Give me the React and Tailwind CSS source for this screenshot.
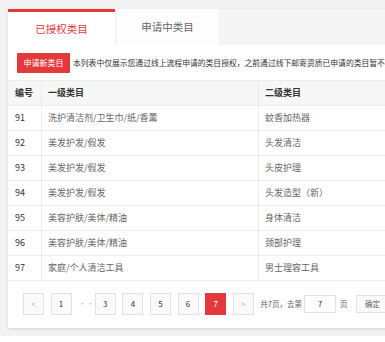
import React from "react";

const rows = [
  ["91", "洗护清洁剂/卫生巾/纸/香薰", "蚊香加热器"],
  ["92", "美发护发/假发", "头发清洁"],
  ["93", "美发护发/假发", "头皮护理"],
  ["94", "美发护发/假发", "头发造型（新）"],
  ["95", "美容护肤/美体/精油", "身体清洁"],
  ["96", "美容护肤/美体/精油", "颈部护理"],
  ["97", "家庭/个人清洁工具", "男士理容工具"],
];

function PageBtn({ children, active, muted }) {
  return (
    <div
      className={
        "w-[21px] h-[22px] flex items-center justify-center border text-[8px] " +
        (active
          ? "bg-[#e4393c] border-[#e4393c] text-white"
          : "bg-[#fafafa] border-[#e2e2e2] " + (muted ? "text-[#aaa]" : "text-[#333]"))
      }
    >
      {children}
    </div>
  );
}

export default function App() {
  return (
    <div
      className="w-[385px] h-[342px] overflow-hidden bg-[#f2f2f2] relative"
      style={{ fontFamily: '"Noto Sans CJK SC", "Noto Sans", sans-serif' }}
    >
      <div className="pl-[8px] pt-[9px]">
        <div className="w-[440px] bg-white shadow-[0_1px_3px_rgba(0,0,0,0.12)]">
          {/* tabs */}
          <div className="flex h-[36px] bg-[#f5f5f5]">
            <div className="w-[107px] bg-white border-t-[3px] border-[#e4393c] flex items-center justify-center text-[10.5px] text-[#e4393c]">
              已授权类目
            </div>
            <div className="ml-[2px] w-[101px] bg-[#fdfdfd] flex items-center justify-center text-[10.5px] text-[#666]">
              申请中类目
            </div>
          </div>
          {/* notice */}
          <div className="flex items-center pl-[9px] pt-[8px] h-[28px] whitespace-nowrap">
            <div className="w-[53px] h-[20px] bg-[#e4393c] rounded-[1px] text-white text-[8px] flex items-center justify-center">
              申请新类目
            </div>
            <div className="ml-[3px] text-[7.8px] text-[#333]">
              本列表中仅展示您通过线上流程申请的类目授权，之前通过线下邮寄资质已申请的类目暂不在此展示
            </div>
          </div>
          {/* table */}
          <div className="mt-[7px] border-t border-[#ececec]">
            <div className="flex h-[25px] bg-[#f7f7f7] border-b border-[#ececec] text-[9px] text-[#333] font-bold">
              <div className="w-[34px] pl-[7px] flex items-center border-r border-[#ececec]">编号</div>
              <div className="w-[217px] pl-[6px] flex items-center border-r border-[#ececec]">一级类目</div>
              <div className="flex-1 pl-[6px] flex items-center">二级类目</div>
            </div>
            {rows.map((r) => (
              <div key={r[0]} className="flex h-[25px] border-b border-[#ececec] text-[9px]">
                <div className="w-[34px] pl-[7px] flex items-center border-r border-[#ececec] text-[#333]">{r[0]}</div>
                <div className="w-[217px] pl-[6px] flex items-center border-r border-[#ececec] text-[#666]">{r[1]}</div>
                <div className="flex-1 pl-[6px] flex items-center text-[#666]">{r[2]}</div>
              </div>
            ))}
          </div>
          {/* pagination */}
          <div className="flex items-center pl-[15px] pt-[12px] pb-[13px] gap-[6.6px]">
            <PageBtn muted>&lt;</PageBtn>
            <PageBtn>1</PageBtn>
            <div className="w-[10px] text-[8px] text-[#bbb] text-center leading-none">···</div>
            <PageBtn>3</PageBtn>
            <PageBtn>4</PageBtn>
            <PageBtn>5</PageBtn>
            <PageBtn>6</PageBtn>
            <PageBtn active>7</PageBtn>
            <PageBtn muted>&gt;</PageBtn>
            <div className="flex items-center text-[7.5px] text-[#666] whitespace-nowrap">
              <span>共7页，去第</span>
              <div className="ml-[2px] w-[32px] h-[18px] border border-[#e2e2e2] bg-white flex items-center justify-center text-[#333]">7</div>
              <span className="ml-[4px]">页</span>
              <div className="ml-[8px] w-[34px] h-[18px] border border-[#e2e2e2] bg-[#fafafa] flex items-center justify-center text-[#666]">确定</div>
            </div>
          </div>
        </div>
      </div>
      <div className="absolute left-0 right-0 top-[336px] h-[10px] bg-white"></div>
    </div>
  );
}
